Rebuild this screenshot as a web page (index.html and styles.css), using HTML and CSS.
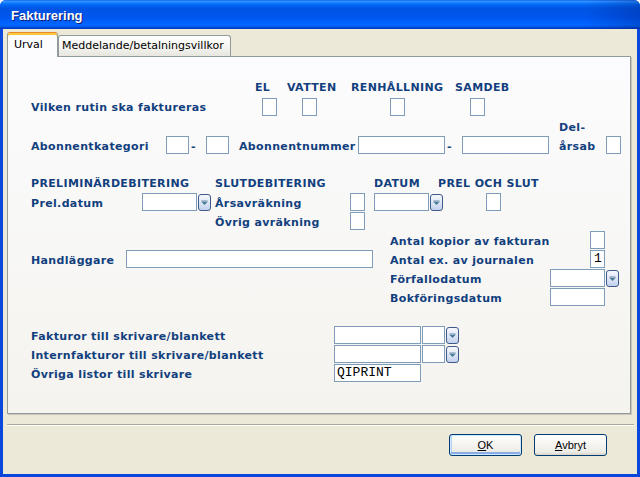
FILE: index.html
```html
<!DOCTYPE html>
<html lang="sv">
<head>
<meta charset="utf-8">
<title>Fakturering</title>
<link rel="stylesheet" href="styles.css">
</head>
<body>
<div class="window">
  <div class="titlebar"><span class="title">Fakturering</span></div>
  <div class="body">
    <div class="tabs">
      <div class="tab active">Urval</div>
      <div class="tab">Meddelande/betalningsvillkor</div>
    </div>
    <div class="panel">
      <div class="hrow r-a">
        <span class="h h-el">EL</span><span class="h h-vat">VATTEN</span><span class="h h-ren">RENHÅLLNING</span><span class="h">SAMDEB</span>
      </div>
      <div class="row r-b">
        <span class="lab w231">Vilken rutin ska faktureras</span>
        <span class="f w15"></span>
        <span class="f w15 ml25"></span>
        <span class="f w15 ml73"></span>
        <span class="f w15 ml65"></span>
      </div>
      <div class="hrow r-c">
        <span class="h ml528">Del-</span>
      </div>
      <div class="row r-d">
        <span class="lab w135">Abonnentkategori</span>
        <span class="f w23"></span>
        <span class="lab dash">-</span>
        <span class="f w23"></span>
        <span class="lab w119 ml10">Abonnentnummer</span>
        <span class="f w87"></span>
        <span class="lab dash">-</span>
        <span class="f w87"></span>
        <span class="lab w47 ml10">årsab</span>
        <span class="f w15"></span>
      </div>
      <div class="hrow r-e">
        <span class="h w184">PRELIMINÄRDEBITERING</span><span class="h w159">SLUTDEBITERING</span><span class="h w64">DATUM</span><span class="h">PREL OCH SLUT</span>
      </div>
      <div class="row r-f">
        <span class="lab w111">Prel.datum</span>
        <span class="f w55"></span>
        <span class="dd"><svg width="11" height="15" viewBox="0 0 11 15"><path d="M2.5 5.5h6" stroke="#A9B8CF" stroke-width="1"/><path d="M2 6.5h7l-3.5 3.5z" fill="#4A7C98"/></svg></span>
        <span class="lab w135 ml4">Årsavräkning</span>
        <span class="f w15"></span>
        <span class="f w55 ml9"></span>
        <span class="dd"><svg width="11" height="15" viewBox="0 0 11 15"><path d="M2.5 5.5h6" stroke="#A9B8CF" stroke-width="1"/><path d="M2 6.5h7l-3.5 3.5z" fill="#4A7C98"/></svg></span>
        <span class="f w15 ml43"></span>
      </div>
      <div class="row r-g">
        <span class="lab w135 ml184">Övrig avräkning</span>
        <span class="f w15"></span>
      </div>
      <div class="row r-g">
        <span class="lab w200 ml359">Antal kopior av fakturan</span>
        <span class="f w15"></span>
      </div>
      <div class="row r-g">
        <span class="lab w95">Handläggare</span>
        <span class="f w247"></span>
        <span class="lab w200 ml17">Antal ex. av journalen</span>
        <span class="f w15 mono one">1</span>
      </div>
      <div class="row r-g">
        <span class="lab w160 ml359">Förfallodatum</span>
        <span class="f w55"></span>
        <span class="dd"><svg width="11" height="15" viewBox="0 0 11 15"><path d="M2.5 5.5h6" stroke="#A9B8CF" stroke-width="1"/><path d="M2 6.5h7l-3.5 3.5z" fill="#4A7C98"/></svg></span>
      </div>
      <div class="row r-g">
        <span class="lab w160 ml359">Bokföringsdatum</span>
        <span class="f w55"></span>
      </div>
      <div class="row r-l">
        <span class="lab w303">Fakturor till skrivare/blankett</span>
        <span class="f w87"></span>
        <span class="f w23 ml1"></span>
        <span class="dd"><svg width="11" height="15" viewBox="0 0 11 15"><path d="M2.5 5.5h6" stroke="#A9B8CF" stroke-width="1"/><path d="M2 6.5h7l-3.5 3.5z" fill="#4A7C98"/></svg></span>
      </div>
      <div class="row r-g">
        <span class="lab w303">Internfakturor till skrivare/blankett</span>
        <span class="f w87"></span>
        <span class="f w23 ml1"></span>
        <span class="dd"><svg width="11" height="15" viewBox="0 0 11 15"><path d="M2.5 5.5h6" stroke="#A9B8CF" stroke-width="1"/><path d="M2 6.5h7l-3.5 3.5z" fill="#4A7C98"/></svg></span>
      </div>
      <div class="row r-g">
        <span class="lab w303">Övriga listor till skrivare</span>
        <span class="f w87 mono">QIPRINT</span>
      </div>
    </div>
    <div class="sep"></div>
    <div class="buttons">
      <div class="btn default"><span class="u">O</span>K</div>
      <div class="btn"><span class="u">A</span>vbryt</div>
    </div>
  </div>
</div>
</body>
</html>
```
FILE: styles.css
```css
html, body {
  margin: 0;
  padding: 0;
  background: #ffffff;
}

.window {
  width: 640px;
  height: 477px;
  display: flex;
  flex-direction: column;
  background: #0A48DD;
  border-radius: 6px 6px 0 0;
  overflow: hidden;
  font-family: "DejaVu Sans", sans-serif;
}

.titlebar {
  flex: none;
  height: 29px;
  box-sizing: border-box;
  padding-left: 11px;
  display: flex;
  align-items: center;
  background:
    linear-gradient(90deg, rgba(0, 20, 110, 0) 585px, rgba(0, 20, 110, 0.28) 100%),
    linear-gradient(180deg, #0058EE 0px, #3A93FF 1px, #288EFF 2px, #127DFF 3px, #036FFC 4px, #0262EE 6px, #0057E5 8px, #0054E3 10px, #0055EB 14px, #0056EE 17px, #005BF5 20px, #0063FF 23px, #0067FF 25px, #0061F8 26px, #0052E0 27px, #0041C8 28px, #0036B8 29px);
}

.title {
  font: bold 13px "Liberation Sans", sans-serif;
  color: #ffffff;
  text-shadow: 1px 1px 0 #0A1C74;
  padding-top: 1px;
}

.body {
  flex: 1;
  margin: 0 3px 3px 3px;
  background: #ECE9D8;
  display: flex;
  flex-direction: column;
}

.tabs {
  display: flex;
  align-items: flex-end;
  height: 24px;
  margin: 3px 0 0 4px;
}

.tab {
  box-sizing: border-box;
  width: 173px;
  height: 21px;
  border: 1px solid #919B9C;
  border-bottom: none;
  border-radius: 3px 3px 0 0;
  background: linear-gradient(180deg, #FFFFFF, #F3F3EF 60%, #E6E5DE);
  font-size: 11px;
  line-height: 16px;
  padding: 2px 0 0 3px;
  color: #000000;
  white-space: nowrap;
}

.tab.active {
  width: 51px;
  height: 25px;
  margin-bottom: -1px;
  position: relative;
  z-index: 1;
  background: #FCFCFE;
  border-top: 1px solid #E68B2C;
  box-shadow: inset 0 2px 0 #FFC83C;
  padding: 4px 0 0 6px;
}

.panel {
  box-sizing: border-box;
  width: 624px;
  height: 358px;
  margin-left: 4px;
  border: 1px solid #919B9C;
  background: linear-gradient(180deg, #FCFCFE, #F4F3EE);
  box-shadow: 1px 1px 0 #C9C6B8;
  padding: 23px 0 0 23px;
  color: #123F7D;
  font-weight: bold;
  font-size: 11px;
  letter-spacing: 0.35px;
}

.hrow {
  display: flex;
  height: 16px;
  line-height: 16px;
  white-space: nowrap;
}

.h {
  flex: none;
}

.h-el { margin-left: 224px; width: 32px; }
.h-vat { width: 64px; }
.h-ren { width: 104px; }

.row {
  display: flex;
  align-items: flex-start;
  height: 18px;
}

.lab {
  flex: none;
  line-height: 18px;
  padding-top: 2px;
  white-space: nowrap;
}

.r-b .lab { padding-top: 1px; }

.dash {
  width: 15px;
  padding-left: 2px;
}

.f {
  flex: none;
  box-sizing: border-box;
  height: 18px;
  border: 1px solid #7F9DB9;
  background: #ffffff;
}

.mono {
  font: normal 13px "Liberation Mono", monospace;
  letter-spacing: 0;
  line-height: 16px;
  color: #000000;
  padding-left: 2px;
}

.one { padding-left: 3px; }

.dd {
  flex: none;
  box-sizing: border-box;
  width: 13px;
  height: 17px;
  margin: 1px 0 0 1px;
  border: 1px solid #3E5A88;
  border-radius: 3px;
  background: linear-gradient(180deg, #F6F8FD, #DCE5F6 55%, #C3D1EE);
  display: flex;
}

.dd svg { display: block; }

.r-a { margin-top: 0; }
.r-b { margin-top: 2px; }
.r-c { margin-top: 4px; }
.r-d { margin-top: 0; }
.r-e { margin-top: 22px; }
.r-f { margin-top: 1px; }
.r-g { margin-top: 1px; }
.r-l { margin-top: 20px; }

.w15 { width: 15px; }
.w23 { width: 23px; }
.w47 { width: 47px; }
.w55 { width: 55px; }
.w64 { width: 64px; }
.w87 { width: 87px; }
.w95 { width: 95px; }
.w111 { width: 111px; }
.w119 { width: 119px; }
.w135 { width: 135px; }
.w159 { width: 159px; }
.w160 { width: 160px; }
.w184 { width: 184px; }
.w200 { width: 200px; }
.w231 { width: 231px; }
.w247 { width: 247px; }
.w303 { width: 303px; }

.ml1 { margin-left: 1px; }
.ml4 { margin-left: 4px; }
.ml9 { margin-left: 9px; }
.ml10 { margin-left: 10px; }
.ml17 { margin-left: 17px; }
.ml25 { margin-left: 25px; }
.ml43 { margin-left: 43px; }
.ml65 { margin-left: 65px; }
.ml73 { margin-left: 73px; }
.ml184 { margin-left: 184px; }
.ml359 { margin-left: 359px; }
.ml528 { margin-left: 528px; }

.sep {
  margin: 10px 0 0 4px;
  width: 627px;
  height: 1px;
  background: #ACA899;
  border-bottom: 1px solid #FFFFFF;
}

.buttons {
  display: flex;
  justify-content: flex-end;
  gap: 12px;
  margin-top: 8px;
  padding-right: 30px;
}

.btn {
  box-sizing: border-box;
  width: 73px;
  height: 22px;
  border: 1px solid #003C74;
  border-radius: 3px;
  background: linear-gradient(180deg, #FFFFFF, #F5F4F0 50%, #ECEBE6 85%, #D8D4C8);
  font: 11px "Liberation Sans", sans-serif;
  color: #000000;
  display: flex;
  align-items: center;
  justify-content: center;
}

.btn.default {
  box-shadow: inset 0 0 0 1px #CEE7FF, inset 0 -2px 0 1px #89ADE4, inset 1px 0 0 1px #B6D1F4;
}

.u { text-decoration: underline; }
```
